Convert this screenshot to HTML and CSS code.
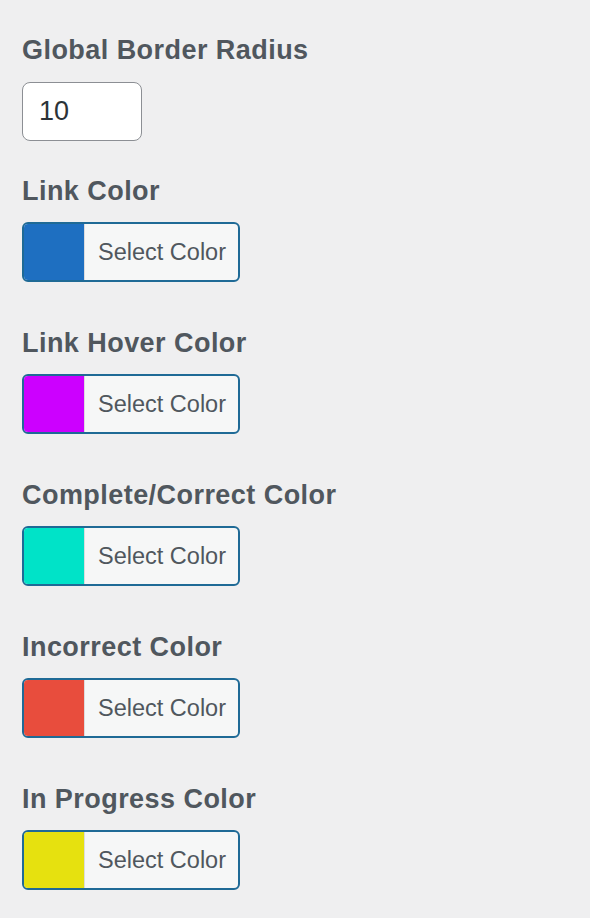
FILE: index.html
```html
<!DOCTYPE html>
<html>
<head>
<meta charset="utf-8">
<link rel="stylesheet" href="styles.css">
</head>
<body>
<div class="settings">
  <div class="field field-first">
    <div class="label">Global Border Radius</div>
    <input class="num" type="text" value="10">
  </div>
  <div class="field">
    <div class="label">Link Color</div>
    <button class="picker"><span class="swatch" style="background:#1e6fc1"></span><span class="btn-text">Select Color</span></button>
  </div>
  <div class="field">
    <div class="label">Link Hover Color</div>
    <button class="picker"><span class="swatch" style="background:#cc00ff"></span><span class="btn-text">Select Color</span></button>
  </div>
  <div class="field">
    <div class="label">Complete/Correct Color</div>
    <button class="picker"><span class="swatch" style="background:#00e3c8"></span><span class="btn-text">Select Color</span></button>
  </div>
  <div class="field">
    <div class="label">Incorrect Color</div>
    <button class="picker"><span class="swatch" style="background:#e84d3d"></span><span class="btn-text">Select Color</span></button>
  </div>
  <div class="field">
    <div class="label">In Progress Color</div>
    <button class="picker"><span class="swatch" style="background:#e6e10f"></span><span class="btn-text">Select Color</span></button>
  </div>
</div>
</body>
</html>
```
FILE: styles.css
```css
html, body {
  margin: 0;
  padding: 0;
  background: #efeff0;
}
body {
  font-family: "Liberation Sans", Arial, sans-serif;
  color: #50575e;
}
.settings {
  padding: 35px 0 0 22px;
  display: flex;
  flex-direction: column;
}
.field {
  display: flex;
  flex-direction: column;
  align-items: flex-start;
  margin-bottom: 46px;
}
.field-first {
  margin-bottom: 35px;
}
.label {
  font-size: 27px;
  font-weight: bold;
  line-height: 30px;
  letter-spacing: 0.45px;
  margin-bottom: 16px;
}
.field-first .label {
  margin-bottom: 17px;
}
.num {
  box-sizing: border-box;
  width: 120px;
  height: 59px;
  border: 1.5px solid #8c8f94;
  border-radius: 8px;
  background: #fff;
  font-family: "Liberation Sans", Arial, sans-serif;
  font-size: 27px;
  color: #2c3338;
  padding: 0 0 0 16px;
  outline: none;
}
.picker {
  box-sizing: border-box;
  display: flex;
  align-items: stretch;
  width: 218px;
  height: 60px;
  padding: 0;
  border: 2px solid #1f6a96;
  border-radius: 6px;
  background: #f6f7f7;
  overflow: hidden;
  cursor: pointer;
}
.swatch {
  width: 60px;
  border-right: 1px solid #dcdcde;
}
.btn-text {
  flex: 1;
  display: flex;
  align-items: center;
  padding-left: 13px;
  font-family: "Liberation Sans", Arial, sans-serif;
  font-size: 23.5px;
  color: #50575e;
}
```
